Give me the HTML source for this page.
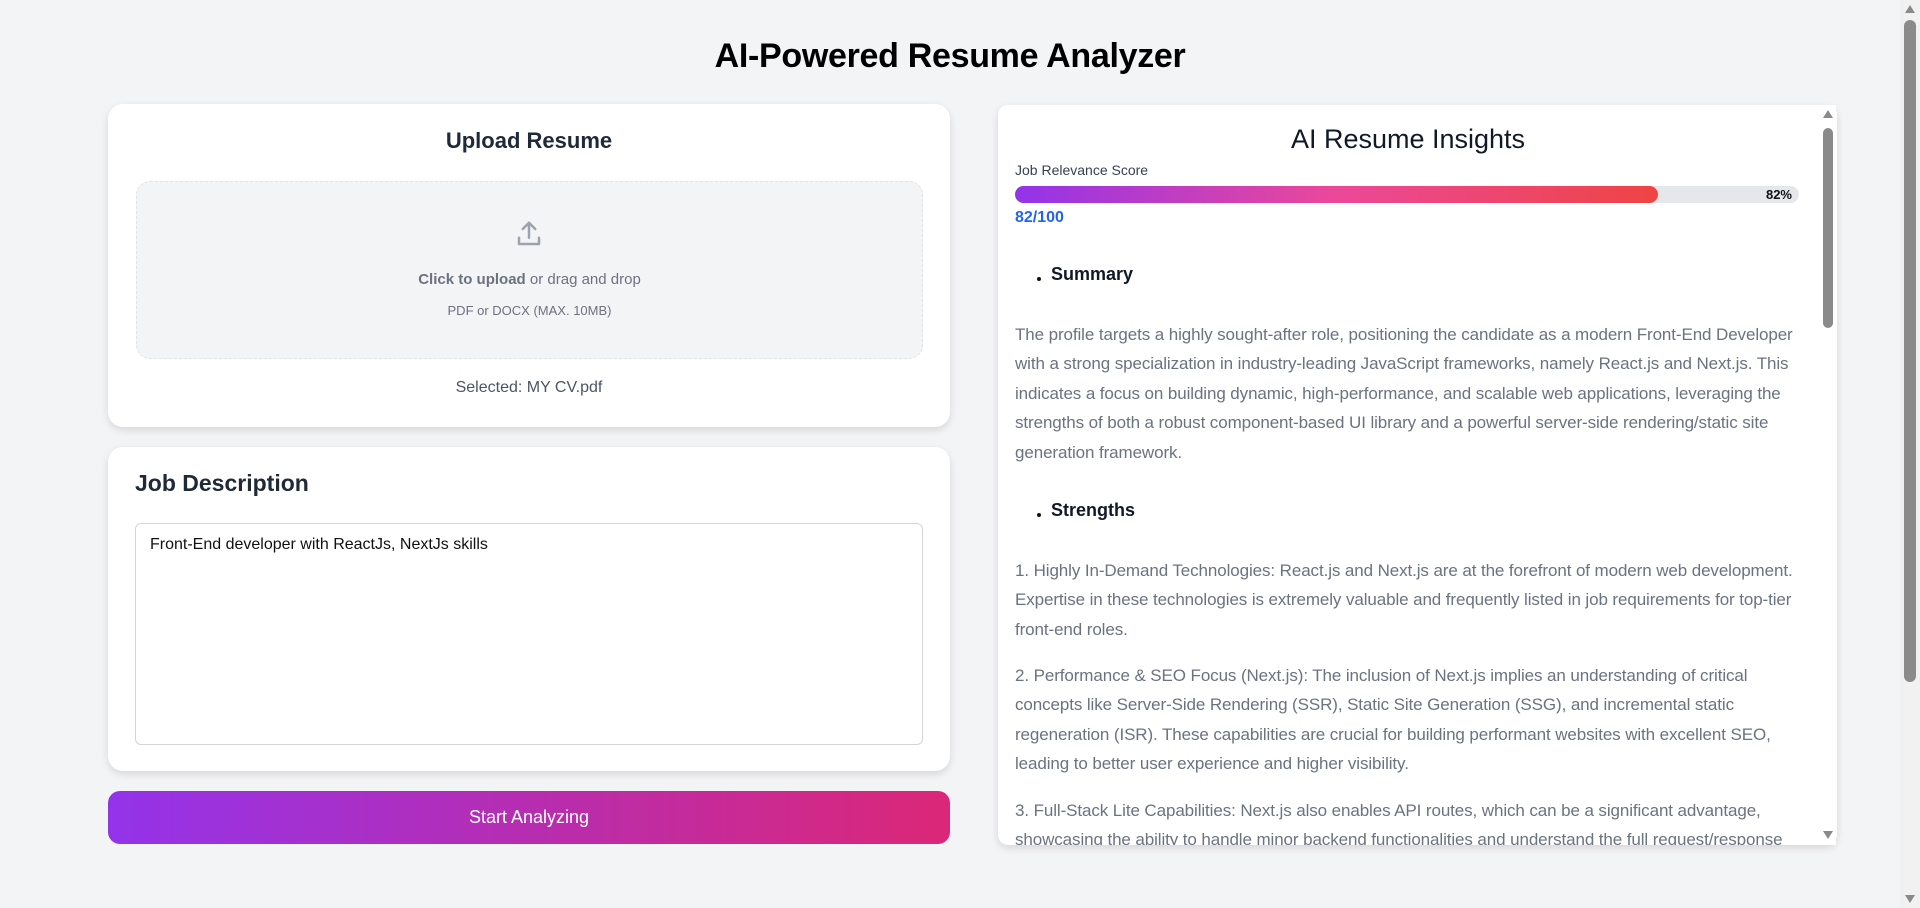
<!DOCTYPE html>
<html><head><meta charset="utf-8"><style>
*{box-sizing:border-box;margin:0;padding:0}
html,body{width:1920px;height:908px;overflow:hidden;background:#f3f4f6;font-family:"Liberation Sans",sans-serif}
.abs{position:absolute}
h1{position:absolute;left:0;width:1900px;top:37px;text-align:center;font-size:34px;font-weight:bold;color:#000;letter-spacing:-0.3px}
.card{position:absolute;background:#fff;border-radius:15px;box-shadow:0 3px 8px rgba(0,0,0,.12)}
.para{position:absolute;left:1015px;font-size:17px;color:#6b7280;line-height:29.4px;white-space:nowrap;letter-spacing:-0.1px}
.bul{position:absolute;left:1051px;font-size:18px;font-weight:bold;color:#111827}
.bul:before{content:"";position:absolute;left:-14px;top:13px;width:4px;height:4px;border-radius:2px;background:#111}
</style></head><body>
<h1>AI-Powered Resume Analyzer</h1>

<div class="card" style="left:108px;top:104px;width:842px;height:323px"></div>
<div class="abs" style="left:108px;width:842px;top:128px;text-align:center;font-size:22px;font-weight:bold;color:#1f2937">Upload Resume</div>
<div class="abs" style="left:136px;top:181px;width:787px;height:178px;background:#f3f4f6;border:1px dashed #e0e2e6;border-radius:14px"></div>
<svg class="abs" style="left:514px;top:219px" width="30" height="30" viewBox="0 0 24 24" fill="none" stroke="#9ca3af" stroke-width="2" stroke-linecap="round" stroke-linejoin="round"><path d="M12 15V3M7 8l5-5 5 5M4 15v5h16v-5"/></svg>
<div class="abs" style="left:136px;width:787px;top:271px;text-align:center;font-size:15px;color:#6b7280"><b>Click to upload</b> or drag and drop</div>
<div class="abs" style="left:136px;width:787px;top:303px;text-align:center;font-size:13px;color:#6b7280">PDF or DOCX (MAX. 10MB)</div>
<div class="abs" style="left:108px;width:842px;top:379px;text-align:center;font-size:16px;color:#4b5563">Selected: MY CV.pdf</div>

<div class="card" style="left:108px;top:447px;width:842px;height:324px"></div>
<div class="abs" style="left:135px;top:470px;font-size:23px;font-weight:bold;color:#1f2937">Job Description</div>
<div class="abs" style="left:135px;top:523px;width:788px;height:222px;border:1px solid #d1d5db;border-radius:6px;background:#fff;padding:12px 14px;font-size:16px;color:#111">Front-End developer with ReactJs, NextJs skills</div>

<div class="abs" style="left:108px;top:791px;width:842px;height:53px;border-radius:12px;background:linear-gradient(90deg,#9333ea,#db2777);color:#fff;font-size:18px;text-align:center;line-height:53px">Start Analyzing</div>

<div class="card" style="left:998px;top:105px;width:839px;height:740px;overflow:hidden;border-radius:10px">
</div>
<div class="abs" style="left:998px;width:820px;top:124px;text-align:center;font-size:27px;color:#111827">AI Resume Insights</div>
<div class="abs" style="left:1015px;top:162px;font-size:14px;color:#374151">Job Relevance Score</div>
<div class="abs" style="left:1015px;top:186px;width:784px;height:17px;border-radius:9px;background:#e5e7eb"></div>
<div class="abs" style="left:1015px;top:186px;width:643px;height:17px;border-radius:9px;background:linear-gradient(90deg,#9333ea,#ec4899 50%,#ef4444)"></div>
<div class="abs" style="left:1700px;width:92px;top:187px;text-align:right;font-size:13px;font-weight:bold;color:#111">82%</div>
<div class="abs" style="left:1015px;top:209px;font-size:16px;font-weight:bold;color:#2563eb">82/100</div>

<div class="bul" style="top:264px">Summary</div>
<div class="para" style="top:320px">The profile targets a highly sought-after role, positioning the candidate as a modern Front-End Developer<br>with a strong specialization in industry-leading JavaScript frameworks, namely React.js and Next.js. This<br>indicates a focus on building dynamic, high-performance, and scalable web applications, leveraging the<br>strengths of both a robust component-based UI library and a powerful server-side rendering/static site<br>generation framework.</div>
<div class="bul" style="top:500px">Strengths</div>
<div class="para" style="top:556px">1. Highly In-Demand Technologies: React.js and Next.js are at the forefront of modern web development.<br>Expertise in these technologies is extremely valuable and frequently listed in job requirements for top-tier<br>front-end roles.</div>
<div class="para" style="top:661px">2. Performance &amp; SEO Focus (Next.js): The inclusion of Next.js implies an understanding of critical<br>concepts like Server-Side Rendering (SSR), Static Site Generation (SSG), and incremental static<br>regeneration (ISR). These capabilities are crucial for building performant websites with excellent SEO,<br>leading to better user experience and higher visibility.</div>
<div class="abs" style="left:998px;top:796px;width:822px;height:49px;overflow:hidden">
<div class="para" style="left:17px;top:0">3. Full-Stack Lite Capabilities: Next.js also enables API routes, which can be a significant advantage,<br>showcasing the ability to handle minor backend functionalities and understand the full request/response</div></div>
<div class="abs" style="left:1820px;top:105px;width:16px;height:740px;background:#fff"></div>
<div class="abs" style="left:1823px;top:110px;width:0;height:0;border-left:5px solid transparent;border-right:5px solid transparent;border-bottom:8px solid #8a8a8a"></div>
<div class="abs" style="left:1823px;top:128px;width:10px;height:200px;border-radius:5px;background:#8a8a8a"></div>
<div class="abs" style="left:1823px;top:831px;width:0;height:0;border-left:5px solid transparent;border-right:5px solid transparent;border-top:8px solid #8a8a8a"></div>
<div class="abs" style="left:1900px;top:0;width:20px;height:908px;background:#f1f1f1"></div>
<div class="abs" style="left:1905px;top:5px;width:0;height:0;border-left:5px solid transparent;border-right:5px solid transparent;border-bottom:8px solid #8a8a8a"></div>
<div class="abs" style="left:1904px;top:20px;width:12px;height:662px;border-radius:6px;background:#8a8a8a"></div>
<div class="abs" style="left:1905px;top:895px;width:0;height:0;border-left:5px solid transparent;border-right:5px solid transparent;border-top:8px solid #8a8a8a"></div>
</body></html>
